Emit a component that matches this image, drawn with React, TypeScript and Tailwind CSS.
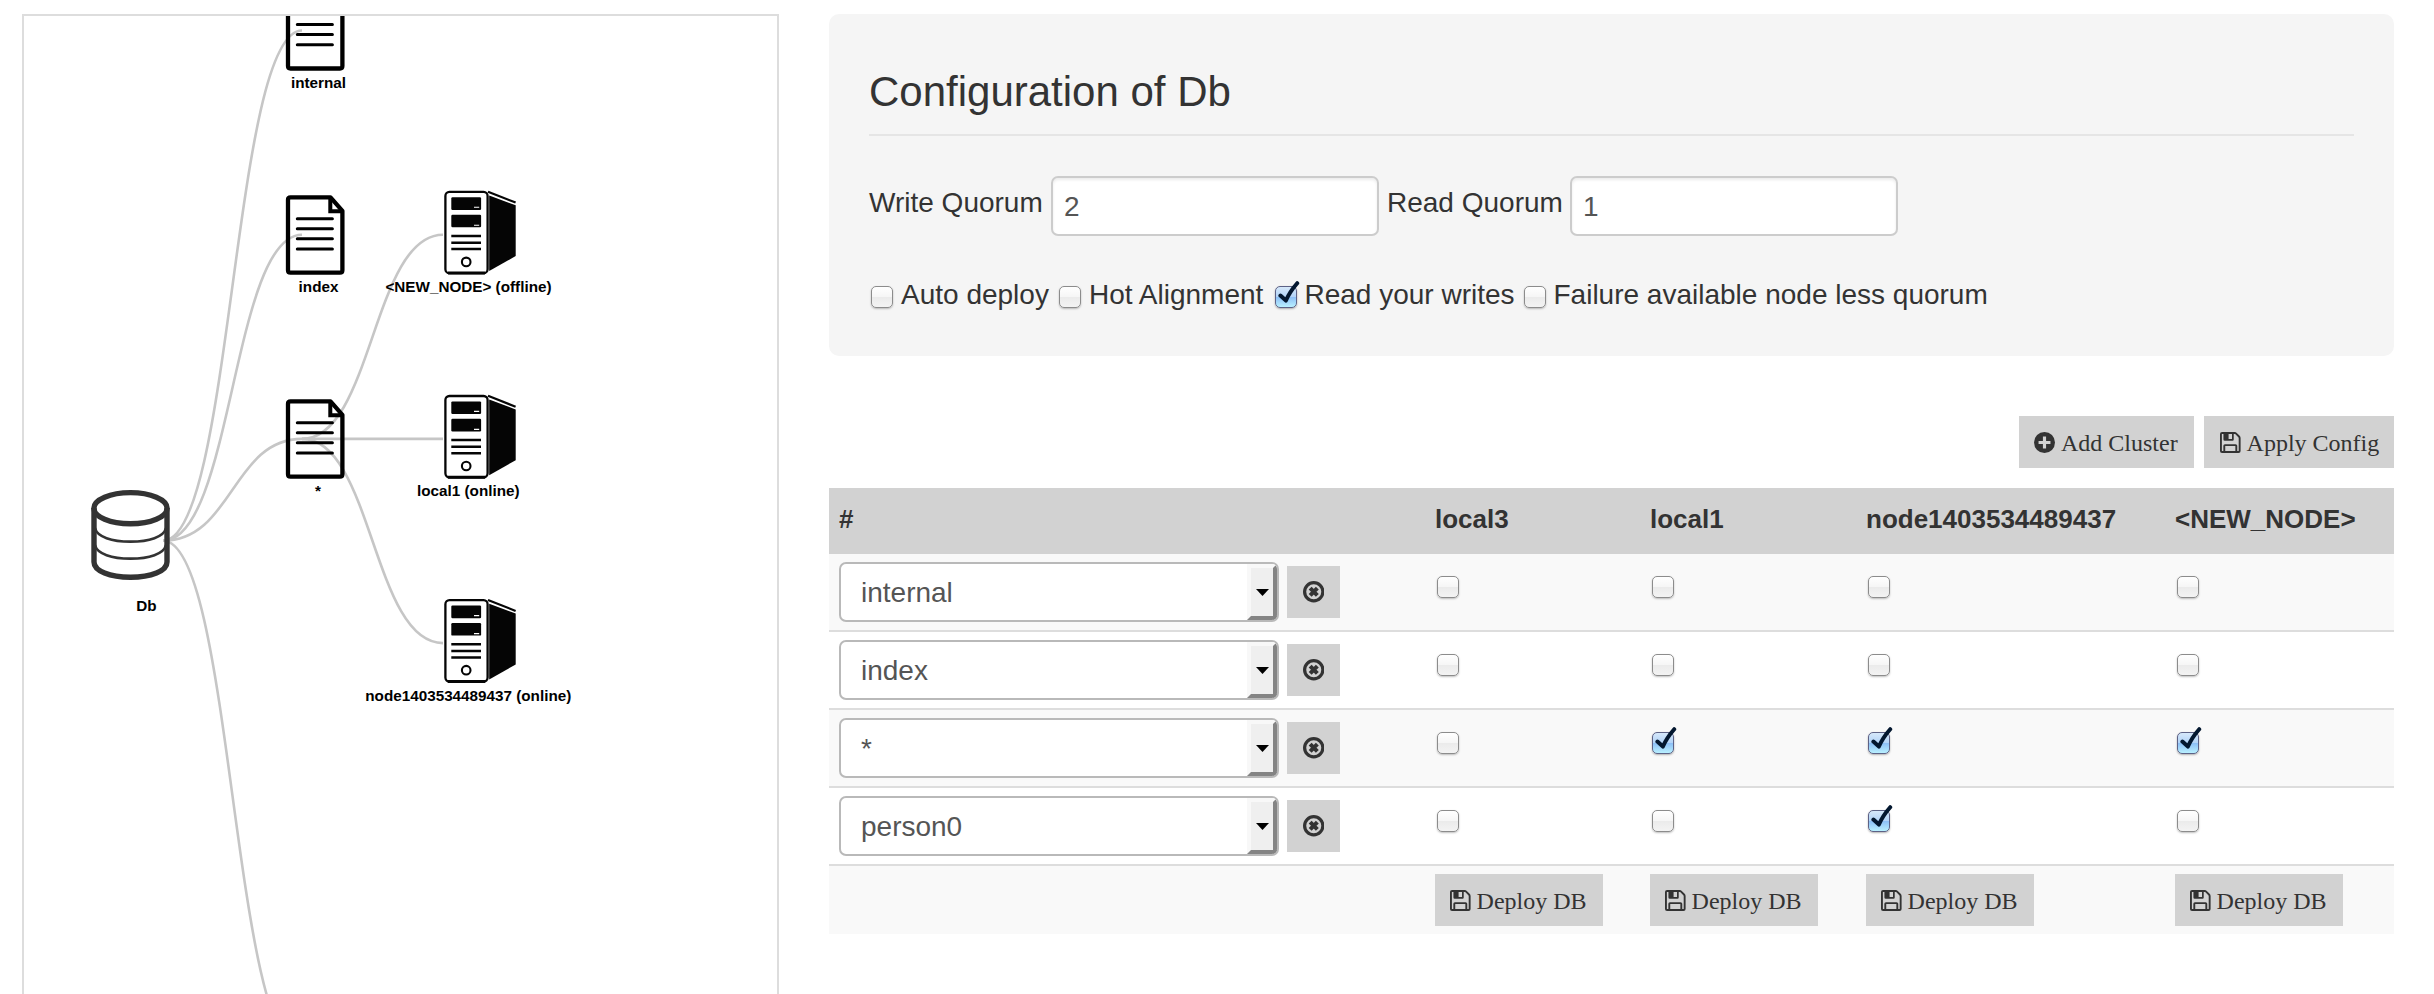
import React from "react";

const DB = { x: 163, y: 540.7 };

const diagonal = (x0: number, y0: number, x1: number, y1: number) => {
  const m = (x0 + x1) / 2;
  return `M${x0} ${y0}C${m} ${y0} ${m} ${y1} ${x1} ${y1}`;
};

const links = [
  diagonal(DB.x, DB.y, 302, 30.5),
  diagonal(DB.x, DB.y, 302, 234.7),
  diagonal(DB.x, DB.y, 302, 438.9),
  diagonal(DB.x, DB.y, 302, 1051),
  diagonal(302, 438.9, 443, 234.7),
  diagonal(302, 438.9, 443, 438.9),
  diagonal(302, 438.9, 443, 643.1),
];

function DocIcon({ y }: { y: number }) {
  return (
    <g transform={`translate(286 ${y})`}>
      <path
        d="M44.5 2H4.5Q2 2 2 4.5V75Q2 77.4 4.5 77.4H54Q56.4 77.4 56.4 75V15.5Z"
        fill="none"
        stroke="#000"
        strokeWidth="4.3"
        strokeLinejoin="round"
      />
      <path d="M44.3 2V16H56" fill="none" stroke="#000" strokeWidth="4" />
      <path
        d="M11.3 23.4H46.4M11.3 33.5H46.4M11.3 43.5H46.4M11.3 53.6H46.4"
        stroke="#000"
        strokeWidth="3"
        strokeLinecap="round"
      />
    </g>
  );
}

function ServerIcon({ y }: { y: number }) {
  return (
    <g transform={`translate(444 ${y})`}>
      <rect x="1.4" y="1.2" width="42.2" height="81.3" rx="4" fill="#fff" stroke="#050505" strokeWidth="2.3" />
      <path d="M4 82.4H41" stroke="#050505" strokeWidth="3" />
      <rect x="7.3" y="6.6" width="29.8" height="12.6" rx="1.2" fill="#050505" />
      <rect x="7.3" y="24" width="29.8" height="12.6" rx="1.2" fill="#050505" />
      <path d="M30 16.6H35.2M30 34.6H35.2" stroke="#fff" strokeWidth="1.1" />
      <path d="M7.3 45.2H37M7.3 52H37M7.3 58.4H37" stroke="#050505" strokeWidth="2.5" />
      <circle cx="22.2" cy="71.2" r="4.3" fill="none" stroke="#050505" strokeWidth="2.1" />
      <path d="M45.2 4.8L71.7 14.6V65.4L45.2 80.4Z" fill="#050505" />
      <path d="M44 1L71.6 11.9" stroke="#050505" strokeWidth="2.2" />
    </g>
  );
}

function Diagram() {
  return (
    <svg className="block h-[978px] w-[753px]" viewBox="24 16 753 978">
      <g fill="none" stroke="#c6c6c6" strokeWidth="2.6">
        {links.map((d) => (
          <path key={d} d={d} />
        ))}
      </g>
      <g fill="none" stroke="#333">
        <ellipse cx="130.5" cy="508.2" rx="36.6" ry="15.6" strokeWidth="5.4" />
        <path d="M94 508V562C94 571 110 577.3 130.5 577.3S167 571 167 562V508" strokeWidth="5.4" />
        <path d="M95 528C97 537 112 541.6 130.5 541.6S164 537 166 528" strokeWidth="2.6" />
        <path d="M95 545C97 554 112 558.6 130.5 558.6S164 554 166 545" strokeWidth="2.6" />
      </g>
      <DocIcon y={-8.9} />
      <DocIcon y={195.3} />
      <DocIcon y={399.3} />
      <ServerIcon y={190.7} />
      <ServerIcon y={394.8} />
      <ServerIcon y={599} />
      <g
        textAnchor="middle"
        fill="#000"
        className="font-['Liberation_Sans',Arial,sans-serif] text-[15.25px] font-bold"
      >
        <text x="318.5" y="87.7">internal</text>
        <text x="318.5" y="292">index</text>
        <text x="318" y="496.3">*</text>
        <text x="146.3" y="611">Db</text>
        <text x="468.5" y="292">{"<NEW_NODE> (offline)"}</text>
        <text x="468.3" y="496.3">local1 (online)</text>
        <text x="468.3" y="700.7">node1403534489437 (online)</text>
      </g>
    </svg>
  );
}

function Check({ on = false }: { on?: boolean }) {
  return on ? (
    <span className="relative block size-[22px] shrink-0 rounded-[5px] border-[1.5px] border-[#5d6286] bg-[linear-gradient(#d6e8fa_0%,#b3d4f8_48%,#8dc0f6_52%,#b9f0ff_100%)] shadow-[0_1px_2px_rgba(0,0,0,0.3)]">
      <svg className="absolute -left-px -top-[6px] h-[26px] w-[26px]" viewBox="0 -5 26 26">
        <path
          d="M5.4 9.6L10.9 14.6Q14.5 6 22.2 -2.8"
          fill="none"
          stroke="#03172f"
          strokeWidth="4"
          strokeLinecap="round"
          strokeLinejoin="round"
        />
      </svg>
    </span>
  ) : (
    <span className="block size-[22px] shrink-0 rounded-[5px] border-[1.5px] border-[#8c8c8c] bg-[linear-gradient(#ffffff_0%,#f6f6f6_48%,#ebebeb_52%,#f3f3f3_100%)] shadow-[0_1px_2px_rgba(0,0,0,0.25)]" />
  );
}

function SaveIcon() {
  return (
    <svg className="h-[21px] w-[20.6px] shrink-0" viewBox="0 0 12 12" preserveAspectRatio="none">
      <path
        d="M1.2 .55H8.6Q9 .55 9.4 .95L11.05 2.6Q11.45 3 11.45 3.4V10.8Q11.45 11.45 10.8 11.45H1.2Q.55 11.45 .55 10.8V1.2Q.55 .55 1.2 .55Z"
        fill="none"
        stroke="#333"
        strokeWidth="1.1"
      />
      <path d="M2 0H8V4.3Q8 5 7.3 5H2.7Q2 5 2 4.3ZM5 1V4H7V1Z" fill="#333" fillRule="evenodd" />
      <path
        d="M2.5 11.5V7.9Q2.5 7.5 2.9 7.5H9.1Q9.5 7.5 9.5 7.9V11.5"
        fill="none"
        stroke="#333"
        strokeWidth="1.1"
      />
    </svg>
  );
}

function PlusIcon() {
  return (
    <svg className="h-[21px] w-[21px] shrink-0" viewBox="0 0 12 12">
      <circle cx="6" cy="6" r="6" fill="#333" />
      <path d="M6 2.6V9.4M2.6 6H9.4" stroke="#d2d2d2" strokeWidth="1.8" />
    </svg>
  );
}

function RemoveIcon() {
  return (
    <svg className="h-[21.5px] w-[21.5px]" viewBox="0 0 12 12">
      <circle cx="6" cy="6" r="5.1" fill="none" stroke="#333" strokeWidth="1.8" />
      <path d="M4 4L8 8M8 4L4 8" stroke="#333" strokeWidth="2.3" />
    </svg>
  );
}

function Button({
  icon,
  label,
  className,
}: {
  icon: React.ReactNode;
  label: string;
  className: string;
}) {
  return (
    <button
      className={`flex h-[52px] items-center gap-[6px] whitespace-nowrap bg-[#d2d2d2] font-['Liberation_Serif','Times_New_Roman',serif] text-2xl text-[#333] ${className}`}
    >
      {icon}
      <span className="pt-px">{label}</span>
    </button>
  );
}

function Quorum({ label, value, className }: { label: string; value: string; className: string }) {
  return (
    <label className={`flex ${className}`}>
      <span className="flex-1 whitespace-nowrap leading-[54px]">{label}</span>
      <span className="h-[60px] w-[328px] rounded-[7px] border-2 border-[#ccc] bg-white pl-[11px] leading-[57px] text-[#555] shadow-[inset_0_2px_3px_rgba(0,0,0,0.08)]">
        {value}
      </span>
    </label>
  );
}

function Option({ label, on, className }: { label: string; on?: boolean; className: string }) {
  return (
    <label className={`flex gap-[8px] ${className}`}>
      <span className="pt-[7px]">
        <Check on={on} />
      </span>
      <span className="whitespace-nowrap pt-px leading-[29px]">{label}</span>
    </label>
  );
}

function ClusterSelect({ value }: { value: string }) {
  return (
    <div className="flex h-[60px] w-[440px] overflow-hidden rounded-[7px] border-2 border-[#b9b9b9] bg-white">
      <span className="flex-1 pl-5 text-[28px] leading-[57px] text-[#555]">{value}</span>
      <span className="flex w-[30px] items-center justify-center border-4 border-b-[#848484] border-l-[#f8f8f8] border-r-[#848484] border-t-[#f8f8f8] bg-[#efefef]">
        <svg className="h-[7px] w-[13px] shrink-0" viewBox="0 0 13 7">
          <path d="M0 0H13L6.5 7Z" fill="#000" />
        </svg>
      </span>
    </div>
  );
}

const nodes = ["local3", "local1", "node1403534489437", "<NEW_NODE>"];
const rows = [
  { name: "internal", on: [false, false, false, false] },
  { name: "index", on: [false, false, false, false] },
  { name: "*", on: [false, true, true, true] },
  { name: "person0", on: [false, false, true, false] },
];
const columns = "grid grid-cols-[596px_215px_216px_309px_229px]";

export default function App() {
  return (
    <div className="flex h-[994px] w-[2434px] overflow-hidden bg-white pl-[22px] pt-[14px] font-['Liberation_Sans',Arial,sans-serif] text-[#333]">
      <section className="h-[1000px] w-[757px] shrink-0 overflow-hidden border-2 border-[#ddd]">
        <Diagram />
      </section>

      <main className="ml-[50px] w-[1565px] shrink-0">
        <section className="h-[342px] rounded-[10px] bg-[#f5f5f5] px-10 text-[28px]">
          <h1 className="h-[122px] border-b-2 border-[#e5e5e5] pt-[48px] text-[42px] font-normal leading-[60px]">
            Configuration of Db
          </h1>
          <div className="flex gap-[9px] pt-[40px]">
            <Quorum label="Write Quorum" value="2" className="w-[510px]" />
            <Quorum label="Read Quorum" value="1" className="-ml-px w-[511px]" />
          </div>
          <div className="flex pl-[2px] pt-[43px]">
            <Option label="Auto deploy" className="w-[188px]" />
            <Option label="Hot Alignment" className="w-[215.5px]" />
            <Option label="Read your writes" on className="w-[249px]" />
            <Option label="Failure available node less quorum" className="w-[480px]" />
          </div>
        </section>

        <div className="mt-[60px] flex justify-end gap-[10px]">
          <Button icon={<PlusIcon />} label="Add Cluster" className="w-[175px] pl-[15px]" />
          <Button icon={<SaveIcon />} label="Apply Config" className="w-[190px] pl-4" />
        </div>

        <section className="mt-5">
          <div className={`${columns} h-[66px] bg-[#d2d2d2] text-[26px] font-bold leading-[62px]`}>
            <span className="pl-[10px]">#</span>
            {nodes.map((n) => (
              <span key={n} className="pl-[10px]">
                {n}
              </span>
            ))}
          </div>
          {rows.map((row) => (
            <div
              key={row.name}
              className={`${columns} border-t-2 border-[#ddd] odd:bg-white even:bg-[#f9f9f9] [&:nth-child(2)]:border-t-0`}
            >
              <div className="flex items-center gap-2 py-2 pl-[10px]">
                <ClusterSelect value={row.name} />
                <button className="flex h-[52px] w-[53px] items-center justify-center bg-[#d2d2d2]">
                  <RemoveIcon />
                </button>
              </div>
              {row.on.map((on, i) => (
                <div key={i} className="pl-[12px] pt-[22px]">
                  <Check on={on} />
                </div>
              ))}
            </div>
          ))}
          <div className={`${columns} h-[70px] border-t-2 border-[#ddd] bg-[#f9f9f9] pt-2`}>
            <span />
            {nodes.map((n) => (
              <div key={n} className="pl-[10px]">
                <Button icon={<SaveIcon />} label="Deploy DB" className="w-[168px] pl-[15px]" />
              </div>
            ))}
          </div>
        </section>
      </main>
    </div>
  );
}
